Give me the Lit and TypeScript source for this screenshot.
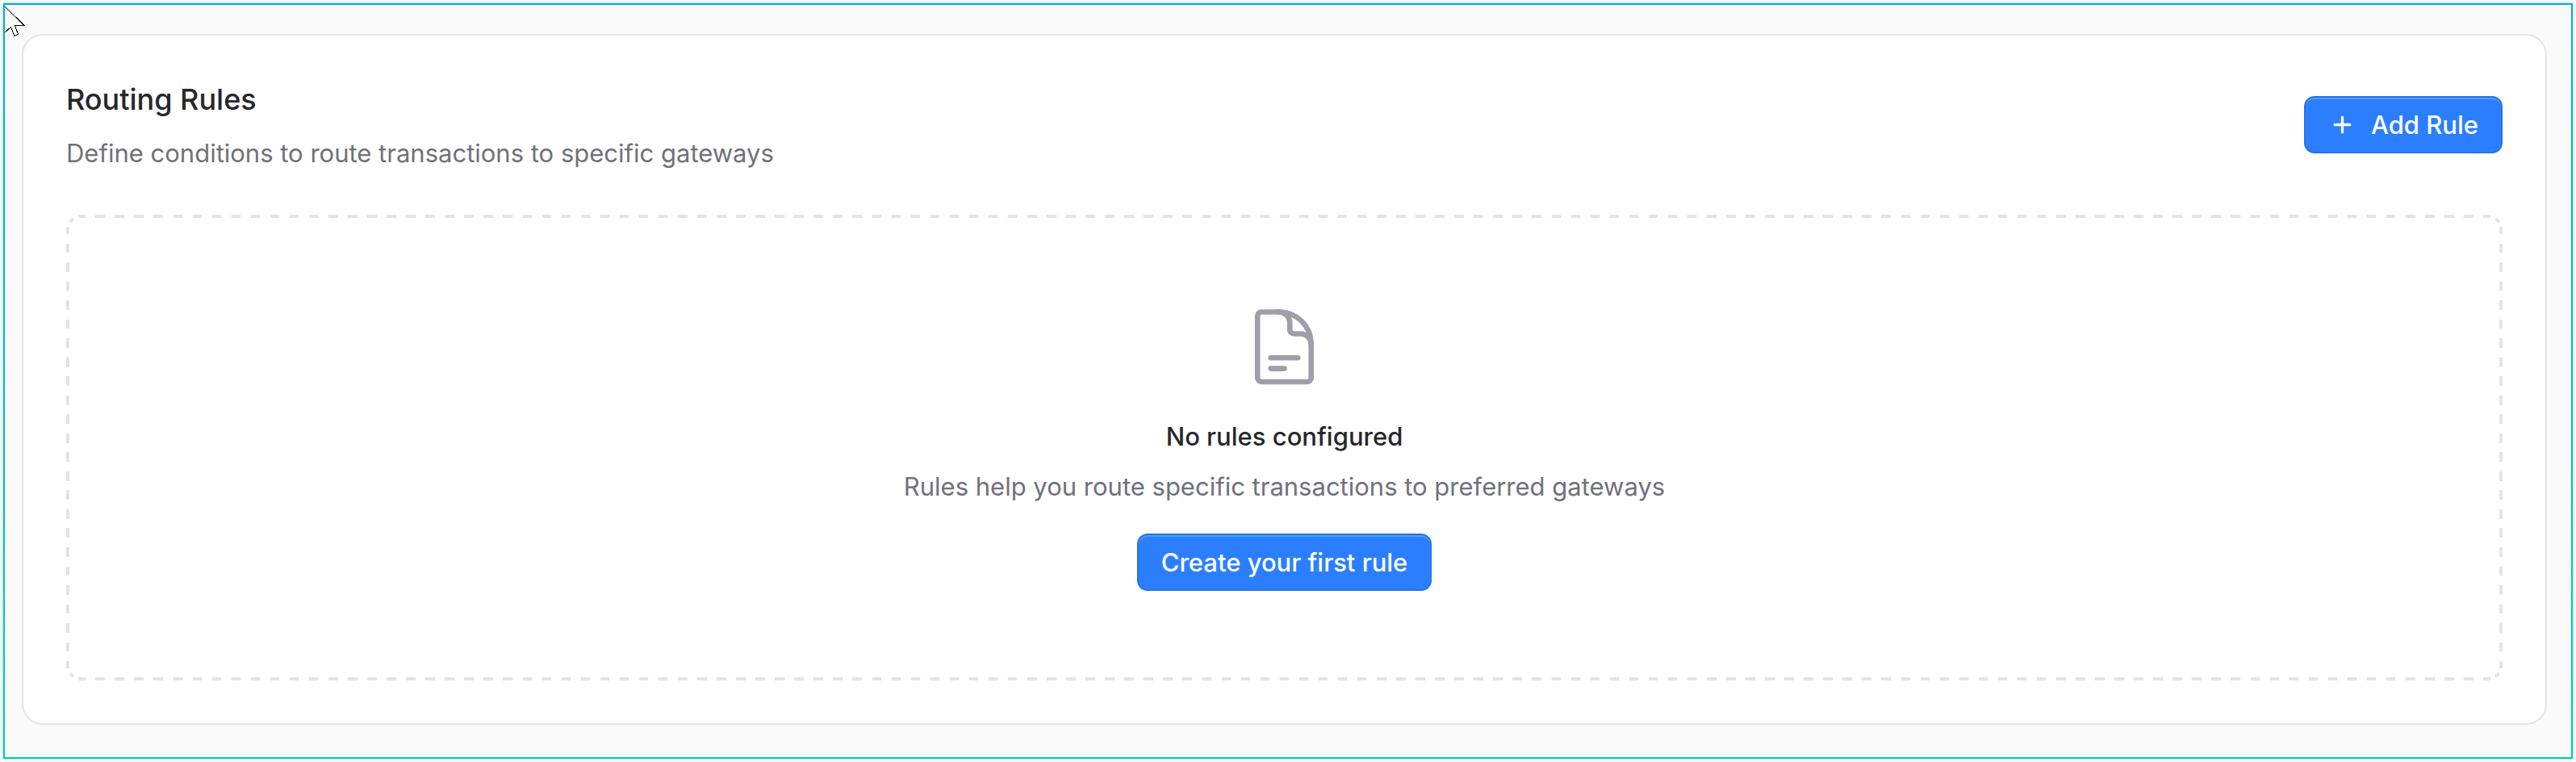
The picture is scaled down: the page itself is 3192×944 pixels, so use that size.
import { LitElement, html, css, svg } from "lit";
import { customElement } from "lit/decorators.js";

const plusIcon = svg`
  <svg class="plus" viewBox="0 0 35 35" aria-hidden="true">
    <path d="M17.5 8.2v18.6M8.2 17.5h18.6" />
  </svg>`;

const documentIcon = svg`
  <svg class="document" viewBox="0.8 0 106 106" aria-hidden="true">
    <path d="M46.5 9.5H25a5 5 0 0 0-5 5V91a5 5 0 0 0 5 5h56.5a5 5 0 0 0 5-5V49a39.5 39.5 0 0 0-39.5-39.5" />
    <path d="M46.5 9.5A13.3 13.3 0 0 1 60 23v8.5a5 5 0 0 0 5 5h8.2A13.3 13.3 0 0 1 86.5 50" />
    <path d="M36.5 66.3H70M36.5 79.6h16.8" />
  </svg>`;

@customElement("app-root")
export class AppRoot extends LitElement {
  static styles = css`
    :host {
      display: block;
      padding: 4px;
      background: #fff;
      font-family: Inter, "Liberation Sans", sans-serif;
      font-size: 31px;
      line-height: 44px;
      color: #27272a;
    }
    * {
      box-sizing: border-box;
    }
    .frame {
      position: relative;
      padding: 36px 30px 40px 21px;
      border: 2px solid transparent;
      background:
        linear-gradient(#fafafa, #fafafa) padding-box,
        linear-gradient(#09adbf, #00ccb0) border-box;
      box-shadow: 0 0 5px rgba(0, 160, 180, 0.4);
    }
    .pointer {
      position: absolute;
      left: 0;
      top: 0;
      width: 26px;
      height: 40px;
      fill: #fff;
      stroke: #000;
      stroke-width: 1;
      shape-rendering: crispEdges;
    }
    .card {
      padding: 53px;
      border: 2px solid #e4e4e7;
      border-radius: 26px;
      background: #fff;
    }
    .header {
      display: flex;
      align-items: center;
      justify-content: space-between;
      gap: 36px;
      margin-bottom: 54px;
    }
    h2,
    h3,
    p {
      margin: 0;
    }
    h2 {
      font-size: 36px;
      line-height: 53px;
      font-weight: 500;
    }
    h3 {
      font-size: 31px;
      line-height: 44px;
      font-weight: 500;
    }
    .text {
      margin-top: 18px;
      color: #71717b;
    }
    .button {
      display: inline-flex;
      align-items: center;
      gap: 18px;
      flex-shrink: 0;
      padding: 12px 28px;
      border: 2px solid #2672e6;
      border-radius: 13px;
      background: #2b7fff;
      box-shadow: inset 0 2px 0 #5599ff;
      color: #fff;
      font: inherit;
      font-weight: 500;
      line-height: 43px;
      cursor: pointer;
    }
    .plus {
      width: 35px;
      height: 35px;
      fill: none;
      stroke: #fff;
      stroke-width: 3.3;
      stroke-linecap: round;
    }
    /* Dashes as long as their gaps, evenly fitted to each side. */
    .empty {
      display: flex;
      flex-direction: column;
      align-items: center;
      padding: 107px 36px;
      border: 4px solid transparent;
      border-image-source: url("data:image/svg+xml,%3Csvg xmlns='http://www.w3.org/2000/svg' width='60' height='60' viewBox='0 0 60 60'%3E%3Cpath fill='none' stroke='%23e4e4e7' stroke-width='4' d='M15 2H24M36 2H45M15 58H24M36 58H45M2 15V24M2 36V45M58 15V24M58 36V45M4.6 8.8L8.8 4.6M51.2 4.6L55.4 8.8M4.6 51.2L8.8 55.4M51.2 55.4L55.4 51.2'/%3E%3C/svg%3E");
      border-image-slice: 18;
      border-image-width: 18px;
      border-image-repeat: round;
      text-align: center;
    }
    .document {
      width: 106px;
      height: 106px;
      margin-bottom: 36px;
      fill: none;
      stroke: #9f9fa9;
      stroke-width: 6.6;
      stroke-linecap: round;
      stroke-linejoin: round;
    }
    .empty .button {
      margin-top: 36px;
    }
  `;

  render() {
    return html`
      <main class="frame">
        <section class="card">
          <header class="header">
            <div>
              <h2>Routing Rules</h2>
              <p class="text">Define conditions to route transactions to specific gateways</p>
            </div>
            <button class="button" type="button">${plusIcon}Add Rule</button>
          </header>
          <div class="empty">
            ${documentIcon}
            <h3>No rules configured</h3>
            <p class="text">Rules help you route specific transactions to preferred gateways</p>
            <button class="button" type="button">Create your first rule</button>
          </div>
        </section>
        <svg class="pointer" viewBox="0 0 26 40" aria-hidden="true">
          <path d="M-0.5 1.5L24 25.5H12.5L16.5 36.5L12 38.5L7.5 27.5L-0.5 34.5" />
        </svg>
      </main>
    `;
  }
}
